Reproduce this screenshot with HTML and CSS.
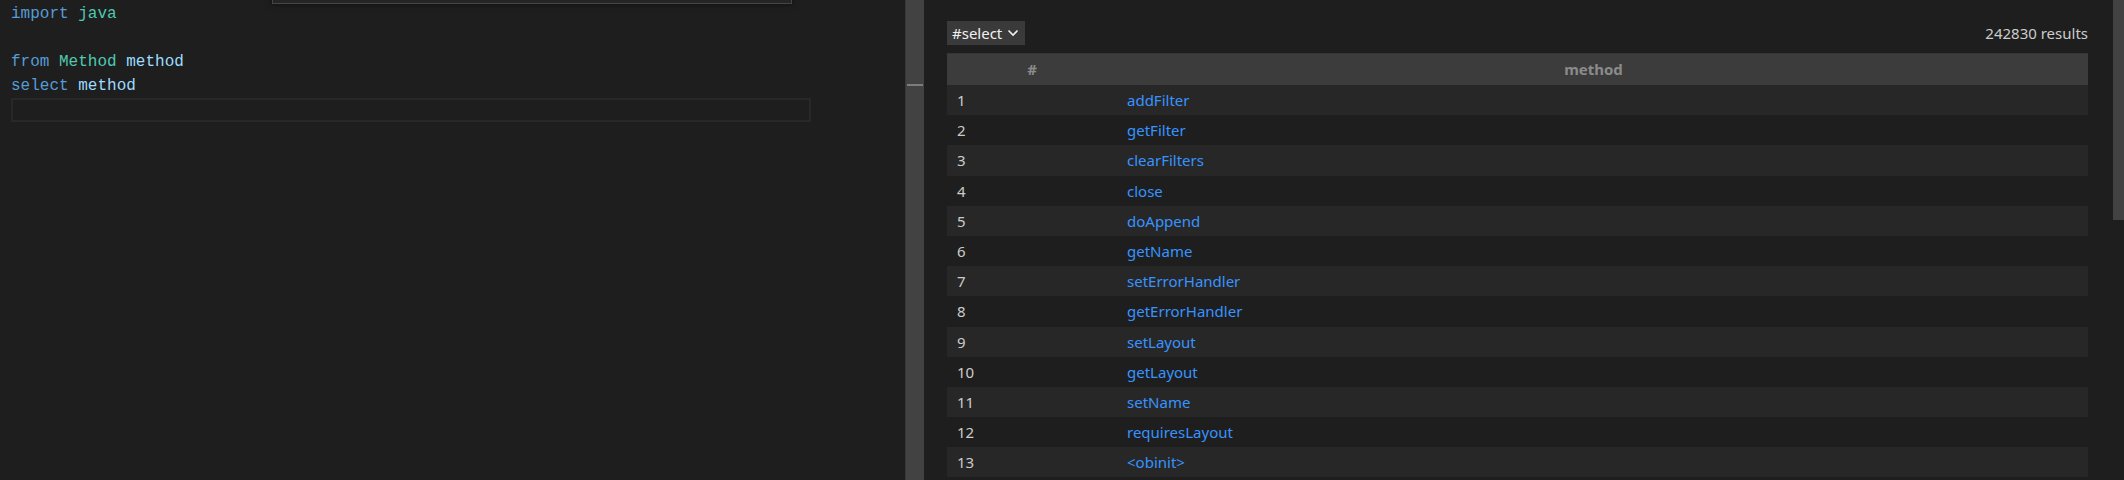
FILE: index.html
```html
<!DOCTYPE html>
<html>
<head>
<meta charset="utf-8">
<link rel="stylesheet" href="styles.css">
</head>
<body>
<div class="editor">
  <div class="find-widget"></div>
  <div class="line"><span class="kw">import</span> <span class="ty">java</span></div>
  <div class="line"></div>
  <div class="line"><span class="kw">from</span> <span class="ty">Method</span> <span class="var">method</span></div>
  <div class="line"><span class="kw">select</span> <span class="var">method</span></div>
  <div class="current-line"></div>
</div>
<div class="sash"><div class="sash-handle"></div></div>
<div class="results">
  <div class="toolbar">
    <div class="dropdown"><span>#select</span><svg width="14" height="14" viewBox="0 0 14 14"><path d="M2.5 4.5 L7 9 L11.5 4.5" fill="none" stroke="#f0f0f0" stroke-width="1.6"/></svg></div>
    <div class="count">242830 results</div>
  </div>
  <div class="table">
    <div class="thead"><div class="th num-h">#</div><div class="th method-h">method</div></div>
    <div class="row"><div class="num">1</div><div class="link">addFilter</div></div>
    <div class="row"><div class="num">2</div><div class="link">getFilter</div></div>
    <div class="row"><div class="num">3</div><div class="link">clearFilters</div></div>
    <div class="row"><div class="num">4</div><div class="link">close</div></div>
    <div class="row"><div class="num">5</div><div class="link">doAppend</div></div>
    <div class="row"><div class="num">6</div><div class="link">getName</div></div>
    <div class="row"><div class="num">7</div><div class="link">setErrorHandler</div></div>
    <div class="row"><div class="num">8</div><div class="link">getErrorHandler</div></div>
    <div class="row"><div class="num">9</div><div class="link">setLayout</div></div>
    <div class="row"><div class="num">10</div><div class="link">getLayout</div></div>
    <div class="row"><div class="num">11</div><div class="link">setName</div></div>
    <div class="row"><div class="num">12</div><div class="link">requiresLayout</div></div>
    <div class="row"><div class="num">13</div><div class="link">&lt;obinit&gt;</div></div>
  </div>
  <div class="scrollbar"></div>
</div>
</body>
</html>
```
FILE: styles.css
```css
html, body {
  margin: 0;
  padding: 0;
}
body {
  background: #1e1e1e;
  width: 2124px;
  height: 480px;
  overflow: hidden;
  display: flex;
}
.editor {
  width: 905px;
  flex: none;
  position: relative;
  padding-top: 2px;
  font-family: "Liberation Mono", "DejaVu Sans Mono", monospace;
  font-size: 16px;
}
.find-widget {
  position: absolute;
  left: 272px;
  top: -30px;
  width: 518px;
  height: 32px;
  background: #252526;
  border: 1px solid #454545;
  box-shadow: 0 0 6px rgba(0,0,0,0.6);
}
.line {
  height: 24px;
  line-height: 24px;
  padding-left: 11px;
  white-space: pre;
}
.kw { color: #569cd6; }
.ty { color: #4ec9b0; }
.var { color: #9cdcfe; }
.current-line {
  margin-left: 11px;
  width: 800px;
  height: 24px;
  box-sizing: border-box;
  border: 2px solid #282828;
}
.sash {
  width: 19px;
  flex: none;
  background: #424242;
  border-left: 1px solid #383838;
  box-sizing: border-box;
  position: relative;
}
.sash-handle {
  position: absolute;
  left: 1px;
  right: 1px;
  top: 84px;
  height: 2px;
  background: #7c7c7c;
}
.results {
  flex: 1;
  position: relative;
  padding: 21px 36px 0 23px;
  font-family: "Noto Sans", "Open Sans", sans-serif;
  font-size: 15px;
  color: #cccccc;
  overflow: hidden;
}
.toolbar {
  display: flex;
  justify-content: space-between;
  align-items: center;
  height: 24px;
}
.dropdown {
  display: flex;
  align-items: center;
  gap: 4px;
  height: 24px;
  padding: 0 5px 0 5px;
  background: #3a3a3a;
  color: #f0f0f0;
}
.dropdown svg {
  display: block;
}
.count {
  color: #cccccc;
}
.table {
  margin-top: 8px;
  width: 1141px;
}
.thead {
  display: grid;
  grid-template-columns: 170px 1fr;
  height: 32px;
  background: #3c3c3c;
  border-top: 1px solid #353535;
  box-sizing: border-box;
}
.th {
  text-align: center;
  line-height: 31px;
  font-weight: bold;
  color: #8b8b8b;
}
.method-h {
  padding-right: 18px;
}
.row {
  display: grid;
  grid-template-columns: 170px 1fr;
  height: 30.2px;
  line-height: 30px;
}
.row:nth-child(even) {
  background: #272727;
}
.num {
  padding-left: 10px;
  color: #cccccc;
}
.link {
  padding-left: 10px;
  color: #3794ff;
}
.scrollbar {
  position: absolute;
  right: 0;
  top: 0;
  width: 11px;
  height: 220px;
  background: #424242;
}
```
